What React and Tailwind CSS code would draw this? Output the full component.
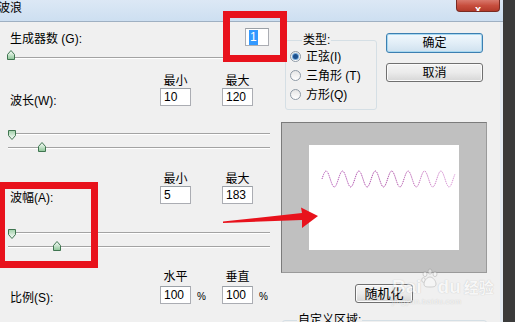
import React from "react";

const Thumb = ({ down }) => (
  <svg width="8" height="10" viewBox="0 0 8 10" className="block">
    <defs>
      <linearGradient id={down ? "tgd" : "tgu"} x1="0" y1="0" x2="0" y2="1">
        <stop offset="0" stopColor={down ? "#9fcfa8" : "#ffffff"} />
        <stop offset="1" stopColor={down ? "#ffffff" : "#8cc597"} />
      </linearGradient>
    </defs>
    <path
      d={down ? "M0.5 0.5H7.5V5.5L4 9.5L0.5 5.5Z" : "M4 0.5L7.5 4.5V9.5H0.5V4.5Z"}
      fill={`url(#${down ? "tgd" : "tgu"})`}
      stroke="#3f7550"
      strokeWidth="1"
    />
  </svg>
);

const Track = ({ className = "" }) => (
  <div className={"absolute left-0 right-0 h-0 border-t border-t-[#a3a3a3] border-b border-b-white " + className} />
);

const Field = ({ value, w = "w-[31px]", selected }) => (
  <div
    className={
      "shrink-0 h-[18px] bg-white border border-[#abadb3] border-t-[#9aa0a6] flex items-center pl-[3px] text-[12px] leading-[14px] text-black " +
      w
    }
  >
    {selected ? <span className="bg-[#3399ff] text-white px-[1px] leading-[15px]">{value}</span> : value}
  </div>
);

const Radio = ({ checked, label }) => (
  <div className="flex items-center h-[19px]">
    <div className="w-[11px] h-[11px] rounded-full border border-[#8e9aa6] bg-gradient-to-b from-[#e6e6e6] to-white flex items-center justify-center">
      {checked && <div className="w-[5px] h-[5px] rounded-full bg-[#1c4f8c] ring-1 ring-[#6fa6d8]" />}
    </div>
    <span className="ml-[5px]">{label}</span>
  </div>
);

const Btn = ({ children, className = "", focus }) => (
  <div
    className={
      "shrink-0 flex items-center justify-center rounded-[3px] border text-[12px] leading-[14px] text-black " +
      (focus
        ? "border-[#3c7fb1] bg-gradient-to-b from-[#f1f8fd] via-[#e2eef7] to-[#cfe1ef] shadow-[inset_0_0_0_1px_#a8d8f0] "
        : "border-[#707070] bg-gradient-to-b from-[#f4f4f4] via-[#ebebeb] to-[#d6d6d6] shadow-[inset_0_0_0_1px_#fbfbfb] ") +
      className
    }
  >
    {children}
  </div>
);

const HeaderRow = ({ a, b, className = "" }) => (
  <div className={"shrink-0 flex h-[14px] leading-[14px] " + className}>
    <div className="w-[160px]" />
    <div className="w-[31px] text-center">{a}</div>
    <div className="w-[31px]" />
    <div className="w-[31px] text-center">{b}</div>
  </div>
);

const PairSlider = ({ className = "", x2 }) => (
  <div className={"shrink-0 relative h-[26px] ml-[8px] w-[262px] " + className}>
    <Track className="top-[5px]" />
    <div className="absolute left-0 top-[2px]">
      <Thumb down />
    </div>
    <Track className="top-[19px]" />
    <div className={"absolute top-[14px] " + x2}>
      <Thumb />
    </div>
  </div>
);

function Wave() {
  const pts = [];
  for (let x = 0; x <= 133; x += 0.5) {
    const y = 34 - 8 * Math.sin((2 * Math.PI * x) / 16.4);
    pts.push(`${(13 + x).toFixed(1)},${y.toFixed(2)}`);
  }
  return (
    <svg width="150" height="105" className="block">
      <defs>
        <linearGradient id="wv" x1="0" y1="0" x2="1" y2="0">
          <stop offset="0" stopColor="#b04fb4" />
          <stop offset="0.5" stopColor="#a43c9c" />
          <stop offset="1" stopColor="#d890d4" />
        </linearGradient>
      </defs>
      <polyline points={pts.join(" ")} fill="none" stroke="url(#wv)" strokeWidth="1" strokeDasharray="1.2 0.8" />
    </svg>
  );
}

export default function App() {
  return (
    <div className="relative w-[515px] h-[322px] overflow-hidden bg-[#3b3b3b] flex text-[12px] leading-[14px] text-black [font-family:'Liberation_Sans','Noto_Sans_CJK_SC',sans-serif]">
      <div className="w-[503px] h-full flex flex-col overflow-hidden">
        {/* title bar */}
        <div className="shrink-0 h-[21px] flex items-start justify-between bg-gradient-to-b from-[#dce8f5] to-[#cddff1]">
          <div className="ml-[-2px] mt-[2px] text-[12px] leading-[13px]">波浪</div>
          <div className="mr-[3px] w-[44px] h-[12px] rounded-b-[4px] border border-t-0 border-[#7a2a22] bg-gradient-to-b from-[#d8786c] via-[#c74e3e] to-[#b33a2a] flex items-end justify-center">
            <span className="text-white font-bold text-[11px] leading-[9px] overflow-hidden h-[6px]">x</span>
          </div>
        </div>
        <div className="shrink-0 h-[1px] bg-[#9fb0c2]" />
        {/* body */}
        <div className="flex-1 min-h-0 flex bg-[#f0f0f0] border-r-[3px] border-[#e4ebf3] overflow-hidden">
          {/* left column */}
          <div className="w-[281px] shrink-0 flex flex-col">
            <div className="shrink-0 mt-[6px] flex items-center h-[18px]">
              <div className="w-[245px] pl-[10px] translate-y-[2px]">生成器数 (G):</div>
              <Field value="1" w="w-[24px]" selected />
            </div>
            <div className="shrink-0 relative h-[11px] mt-[4px] ml-[8px] w-[262px]">
              <Track className="top-[7px]" />
              <div className="absolute left-[-1px] top-0">
                <Thumb />
              </div>
            </div>

            <HeaderRow a="最小" b="最大" className="mt-[13px]" />
            <div className="shrink-0 flex h-[18px]">
              <div className="w-[160px] pl-[10px] self-end translate-y-[2px]">波长(W):</div>
              <Field value="10" />
              <div className="w-[31px]" />
              <Field value="120" />
            </div>
            <PairSlider className="mt-[22px]" x2="left-[30px]" />

            <HeaderRow a="最小" b="最大" className="mt-[18px]" />
            <div className="shrink-0 flex h-[18px]">
              <div className="w-[160px] pl-[10px] self-end translate-y-[1px]">波幅(A):</div>
              <Field value="5" />
              <div className="w-[31px]" />
              <Field value="183" />
            </div>
            <PairSlider className="mt-[23px]" x2="left-[45px]" />

            <HeaderRow a="水平" b="垂直" className="mt-[17px]" />
            <div className="shrink-0 flex h-[18px] mt-[2px]">
              <div className="w-[160px] pl-[10px] self-end translate-y-[1px]">比例(S):</div>
              <Field value="100" />
              <div className="w-[31px] pl-[6px] flex items-center text-[10px] translate-y-[2px]">%</div>
              <Field value="100" />
              <div className="pl-[6px] flex items-center text-[10px] translate-y-[2px]">%</div>
            </div>
          </div>

          {/* right column */}
          <div className="flex-1 flex flex-col">
            <div className="shrink-0 flex">
              <fieldset className="shrink-0 mt-[11px] ml-[4px] w-[92px] h-[77px] border border-[#d5dfe5] rounded-[3px] pl-[4px]">
                <legend className="ml-[12px] px-[1px] leading-[14px]">类型:</legend>
                <Radio checked label="正弦(I)" />
                <Radio label="三角形 (T)" />
                <Radio label="方形(Q)" />
              </fieldset>
              <div className="ml-[9px] mt-[11px] flex flex-col">
                <Btn focus className="w-[97px] h-[20px]">确定</Btn>
                <Btn className="w-[97px] h-[19px] mt-[10px]">取消</Btn>
              </div>
            </div>

            <div className="shrink-0 mt-[12px] w-[206px] h-[151px] bg-[#c0c0c0] border border-[#7b7b7b] border-r-[#9a9a9a] border-b-[#9a9a9a] pl-[27px] pt-[22px]">
              <div className="w-[150px] h-[105px] bg-white">
                <Wave />
              </div>
            </div>

            <Btn className="mt-[11px] ml-[74px] w-[58px] h-[19px] text-[13px]">随机化</Btn>

            <fieldset className="shrink-0 mt-[10px] ml-[1px] w-[205px] h-[40px] border border-[#d5dfe5] rounded-[3px]">
              <legend className="ml-[14px] px-[1px] leading-[14px]">自定义区域:</legend>
            </fieldset>
          </div>
        </div>
      </div>

      {/* annotation overlays */}
      <div className="absolute left-[223px] top-[11px] w-[64px] h-[51px] border-[7px] border-[#e8121c]" />
      <div className="absolute left-[-2px] top-[182px] w-[100px] h-[86px] border-[7px] border-[#e8121c]" />
      <svg className="absolute left-0 top-0" width="515" height="322" style={{ pointerEvents: "none" }}>
        <polygon
          points="223,221.5 302,213 301,207.5 318,216 302,228 302,220 223,223"
          fill="#e8121c"
        />
      </svg>

      {/* watermark */}
      <div className="absolute left-[392px] top-[266px] flex flex-col items-start opacity-50 text-white [text-shadow:0_0_1px_#8a8a8a]">
        <div className="flex items-end h-[30px]">
          <span className="text-[19px] leading-[19px] font-bold [font-family:'Liberation_Sans',sans-serif]">Bai</span>
          <svg width="18" height="28" viewBox="0 0 18 28" className="mx-[-1px]">
            <g fill="#fafafa" stroke="#9a9a9a" strokeWidth="0.8">
              <ellipse cx="4" cy="6" rx="2" ry="2.6" />
              <ellipse cx="9" cy="3.5" rx="2" ry="2.6" />
              <ellipse cx="14" cy="6" rx="2" ry="2.6" />
              <ellipse cx="2.5" cy="12" rx="1.8" ry="2.3" />
              <path d="M9 9c3 0 6 4 6 7s-3 3-6 3-6 0-6-3 3-7 6-7z" />
            </g>
          </svg>
          <span className="text-[19px] leading-[19px] font-bold [font-family:'Liberation_Sans',sans-serif]">du</span>
          <span className="ml-[3px] text-[15px] leading-[17px] font-bold">经验</span>
        </div>
        <div className="text-[8px] leading-[10px] tracking-[0.3px] mt-[1px] [font-family:'Liberation_Sans',sans-serif]">jingyan.baidu.com</div>
      </div>
    </div>
  );
}
